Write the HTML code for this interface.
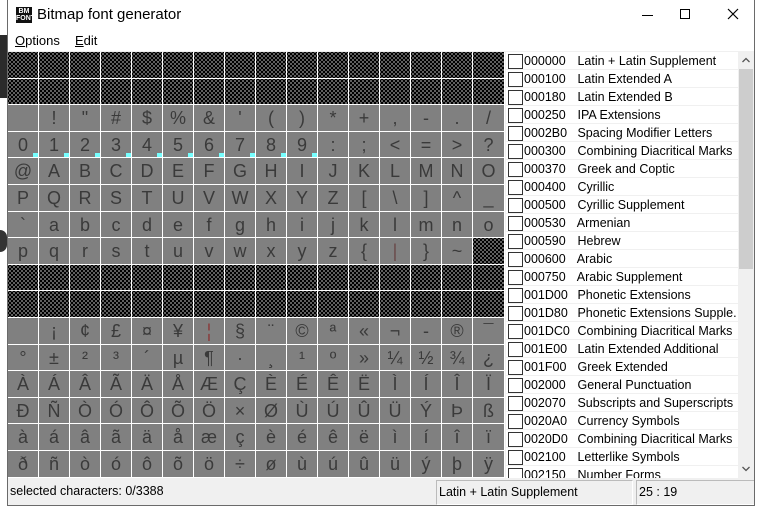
<!DOCTYPE html>
<html><head><meta charset="utf-8"><style>
*{margin:0;padding:0;box-sizing:border-box}
body{width:762px;height:512px;background:#fff;position:relative;overflow:hidden;font-family:"Liberation Sans",sans-serif}
.abs{position:absolute}
#win{left:7px;top:0;width:748px;height:506px;background:#f0f0f0;border:1px solid #6a6a6a;border-top:none}
#title{left:8px;top:0;width:746px;height:31px;background:#fff}
#menu{left:8px;top:31px;width:746px;height:20px;background:#fff;font-size:13px}
#grid{left:8px;top:52px;width:497px;height:426px;background:#fff;display:grid;grid-template-columns:repeat(15,30px) 31px;grid-template-rows:repeat(16,25.6px);column-gap:1px;row-gap:1px}
#grid div{background:#808080;color:#3a3a3a;font-size:18px;text-align:center;line-height:26px;position:relative}
#grid div.b{background-color:#000;background-image:radial-gradient(circle,#6e6e6e 0.9px,transparent 1.2px),radial-gradient(circle,#6e6e6e 0.9px,transparent 1.2px);background-size:4px 4px;background-position:0 0,2px 2px}
#grid div.m::after{content:"";position:absolute;right:0;bottom:0;width:5px;height:4px;background:#7ff}
#list{left:506px;top:52px;width:232px;height:426px;background:#fff;overflow:hidden}
.it{height:18px;border-bottom:1px solid #f0f0f0;font-size:12.5px;line-height:18px;white-space:nowrap;position:relative;padding-left:18px;color:#000}
.it::before{content:"";position:absolute;left:2px;top:2px;width:13px;height:13px;border:1px solid #333;background:#fff}
.it span{display:inline-block;width:50px}
#sb{left:738px;top:52px;width:16px;height:426px;background:#f0f0f0}
#status{left:8px;top:480px;width:746px;height:25px;font-size:12.5px}
</style></head><body>
<div class="abs" style="left:0;top:35px;width:7px;height:63px;background:#2b2b2b"></div>
<div class="abs" style="left:0;top:230px;width:7px;height:22px;background:#333;border-radius:0 10px 10px 0"></div>
<div id="win" class="abs"></div>
<div id="title" class="abs">
 <div class="abs" style="left:8px;top:7px;width:16px;height:16px;background:#111;color:#fff;font-size:7px;font-weight:bold;line-height:7px;text-align:center;padding-top:1px">BM<br>FONT</div>
 <div class="abs" style="left:29px;top:6px;font-size:15px;color:#000">Bitmap font generator</div>
 <div class="abs" style="left:634px;top:15px;width:11px;height:1px;background:#000"></div>
 <div class="abs" style="left:672px;top:9px;width:10px;height:10px;border:1px solid #000"></div>
 <svg class="abs" style="left:719px;top:8px" width="12" height="12"><path d="M1 1L11 11M11 1L1 11" stroke="#000" stroke-width="1.2"/></svg>
</div>
<div id="menu" class="abs"><span class="abs" style="left:7px;top:2px"><u>O</u>ptions</span><span class="abs" style="left:67px;top:2px"><u>E</u>dit</span></div>
<div id="grid" class="abs">
<div class="b"></div><div class="b"></div><div class="b"></div><div class="b"></div><div class="b"></div><div class="b"></div><div class="b"></div><div class="b"></div><div class="b"></div><div class="b"></div><div class="b"></div><div class="b"></div><div class="b"></div><div class="b"></div><div class="b"></div><div class="b"></div>
<div class="b"></div><div class="b"></div><div class="b"></div><div class="b"></div><div class="b"></div><div class="b"></div><div class="b"></div><div class="b"></div><div class="b"></div><div class="b"></div><div class="b"></div><div class="b"></div><div class="b"></div><div class="b"></div><div class="b"></div><div class="b"></div>
<div></div><div>!</div><div>"</div><div>#</div><div>$</div><div>%</div><div>&amp;</div><div>'</div><div>(</div><div>)</div><div>*</div><div>+</div><div>,</div><div>-</div><div>.</div><div>/</div>
<div class="m">0</div><div class="m">1</div><div class="m">2</div><div class="m">3</div><div class="m">4</div><div class="m">5</div><div class="m">6</div><div class="m">7</div><div class="m">8</div><div class="m">9</div><div>:</div><div>;</div><div>&lt;</div><div>=</div><div>&gt;</div><div>?</div>
<div>@</div><div>A</div><div>B</div><div>C</div><div>D</div><div>E</div><div>F</div><div>G</div><div>H</div><div>I</div><div>J</div><div>K</div><div>L</div><div>M</div><div>N</div><div>O</div>
<div>P</div><div>Q</div><div>R</div><div>S</div><div>T</div><div>U</div><div>V</div><div>W</div><div>X</div><div>Y</div><div>Z</div><div>[</div><div>\</div><div>]</div><div>^</div><div>_</div>
<div>`</div><div>a</div><div>b</div><div>c</div><div>d</div><div>e</div><div>f</div><div>g</div><div>h</div><div>i</div><div>j</div><div>k</div><div>l</div><div>m</div><div>n</div><div>o</div>
<div>p</div><div>q</div><div>r</div><div>s</div><div>t</div><div>u</div><div>v</div><div>w</div><div>x</div><div>y</div><div>z</div><div>{</div><div style="color:#6a4a4a">|</div><div>}</div><div>~</div><div class="b"></div>
<div class="b"></div><div class="b"></div><div class="b"></div><div class="b"></div><div class="b"></div><div class="b"></div><div class="b"></div><div class="b"></div><div class="b"></div><div class="b"></div><div class="b"></div><div class="b"></div><div class="b"></div><div class="b"></div><div class="b"></div><div class="b"></div>
<div class="b"></div><div class="b"></div><div class="b"></div><div class="b"></div><div class="b"></div><div class="b"></div><div class="b"></div><div class="b"></div><div class="b"></div><div class="b"></div><div class="b"></div><div class="b"></div><div class="b"></div><div class="b"></div><div class="b"></div><div class="b"></div>
<div></div><div>¡</div><div>¢</div><div>£</div><div>¤</div><div>¥</div><div style="color:#8a3a3a">¦</div><div>§</div><div>¨</div><div>©</div><div>ª</div><div>«</div><div>¬</div><div>-</div><div>®</div><div>¯</div>
<div>°</div><div>±</div><div>²</div><div>³</div><div>´</div><div>µ</div><div>¶</div><div>·</div><div>¸</div><div>¹</div><div>º</div><div>»</div><div>¼</div><div>½</div><div>¾</div><div>¿</div>
<div>À</div><div>Á</div><div>Â</div><div>Ã</div><div>Ä</div><div>Å</div><div>Æ</div><div>Ç</div><div>È</div><div>É</div><div>Ê</div><div>Ë</div><div>Ì</div><div>Í</div><div>Î</div><div>Ï</div>
<div>Ð</div><div>Ñ</div><div>Ò</div><div>Ó</div><div>Ô</div><div>Õ</div><div>Ö</div><div>×</div><div>Ø</div><div>Ù</div><div>Ú</div><div>Û</div><div>Ü</div><div>Ý</div><div>Þ</div><div>ß</div>
<div>à</div><div>á</div><div>â</div><div>ã</div><div>ä</div><div>å</div><div>æ</div><div>ç</div><div>è</div><div>é</div><div>ê</div><div>ë</div><div>ì</div><div>í</div><div>î</div><div>ï</div>
<div>ð</div><div>ñ</div><div>ò</div><div>ó</div><div>ô</div><div>õ</div><div>ö</div><div>÷</div><div>ø</div><div>ù</div><div>ú</div><div>û</div><div>ü</div><div>ý</div><div>þ</div><div>ÿ</div>
</div>
<div id="list" class="abs">
<div class="it"><span>000000</span> Latin + Latin Supplement</div>
<div class="it"><span>000100</span> Latin Extended A</div>
<div class="it"><span>000180</span> Latin Extended B</div>
<div class="it"><span>000250</span> IPA Extensions</div>
<div class="it"><span>0002B0</span> Spacing Modifier Letters</div>
<div class="it"><span>000300</span> Combining Diacritical Marks</div>
<div class="it"><span>000370</span> Greek and Coptic</div>
<div class="it"><span>000400</span> Cyrillic</div>
<div class="it"><span>000500</span> Cyrillic Supplement</div>
<div class="it"><span>000530</span> Armenian</div>
<div class="it"><span>000590</span> Hebrew</div>
<div class="it"><span>000600</span> Arabic</div>
<div class="it"><span>000750</span> Arabic Supplement</div>
<div class="it"><span>001D00</span> Phonetic Extensions</div>
<div class="it"><span>001D80</span> Phonetic Extensions Supple.</div>
<div class="it"><span>001DC0</span> Combining Diacritical Marks</div>
<div class="it"><span>001E00</span> Latin Extended Additional</div>
<div class="it"><span>001F00</span> Greek Extended</div>
<div class="it"><span>002000</span> General Punctuation</div>
<div class="it"><span>002070</span> Subscripts and Superscripts</div>
<div class="it"><span>0020A0</span> Currency Symbols</div>
<div class="it"><span>0020D0</span> Combining Diacritical Marks</div>
<div class="it"><span>002100</span> Letterlike Symbols</div>
<div class="it"><span>002150</span> Number Forms</div>
</div>
<div id="sb" class="abs">
 <svg class="abs" style="left:4px;top:5px" width="8" height="6"><path d="M0.5 5L4 1.5L7.5 5" stroke="#555" stroke-width="1.3" fill="none"/></svg>
 <div class="abs" style="left:1px;top:17px;width:14px;height:200px;background:#cdcdcd"></div>
 <svg class="abs" style="left:4px;top:414px" width="8" height="6"><path d="M0.5 1L4 4.5L7.5 1" stroke="#555" stroke-width="1.3" fill="none"/></svg>
</div>
<div id="status" class="abs">
 <div class="abs" style="left:2px;top:4px">selected characters: 0/3388</div>
 <div class="abs" style="left:428px;top:0;width:197px;height:25px;border:1px solid #bbb;border-right-color:#fff;border-bottom-color:#fff;padding:4px 0 0 2px">Latin + Latin Supplement</div>
 <div class="abs" style="left:628px;top:0;width:118px;height:25px;border:1px solid #bbb;border-right:none;border-bottom-color:#fff;padding:4px 0 0 2px">25 : 19</div>
</div>
</body></html>
